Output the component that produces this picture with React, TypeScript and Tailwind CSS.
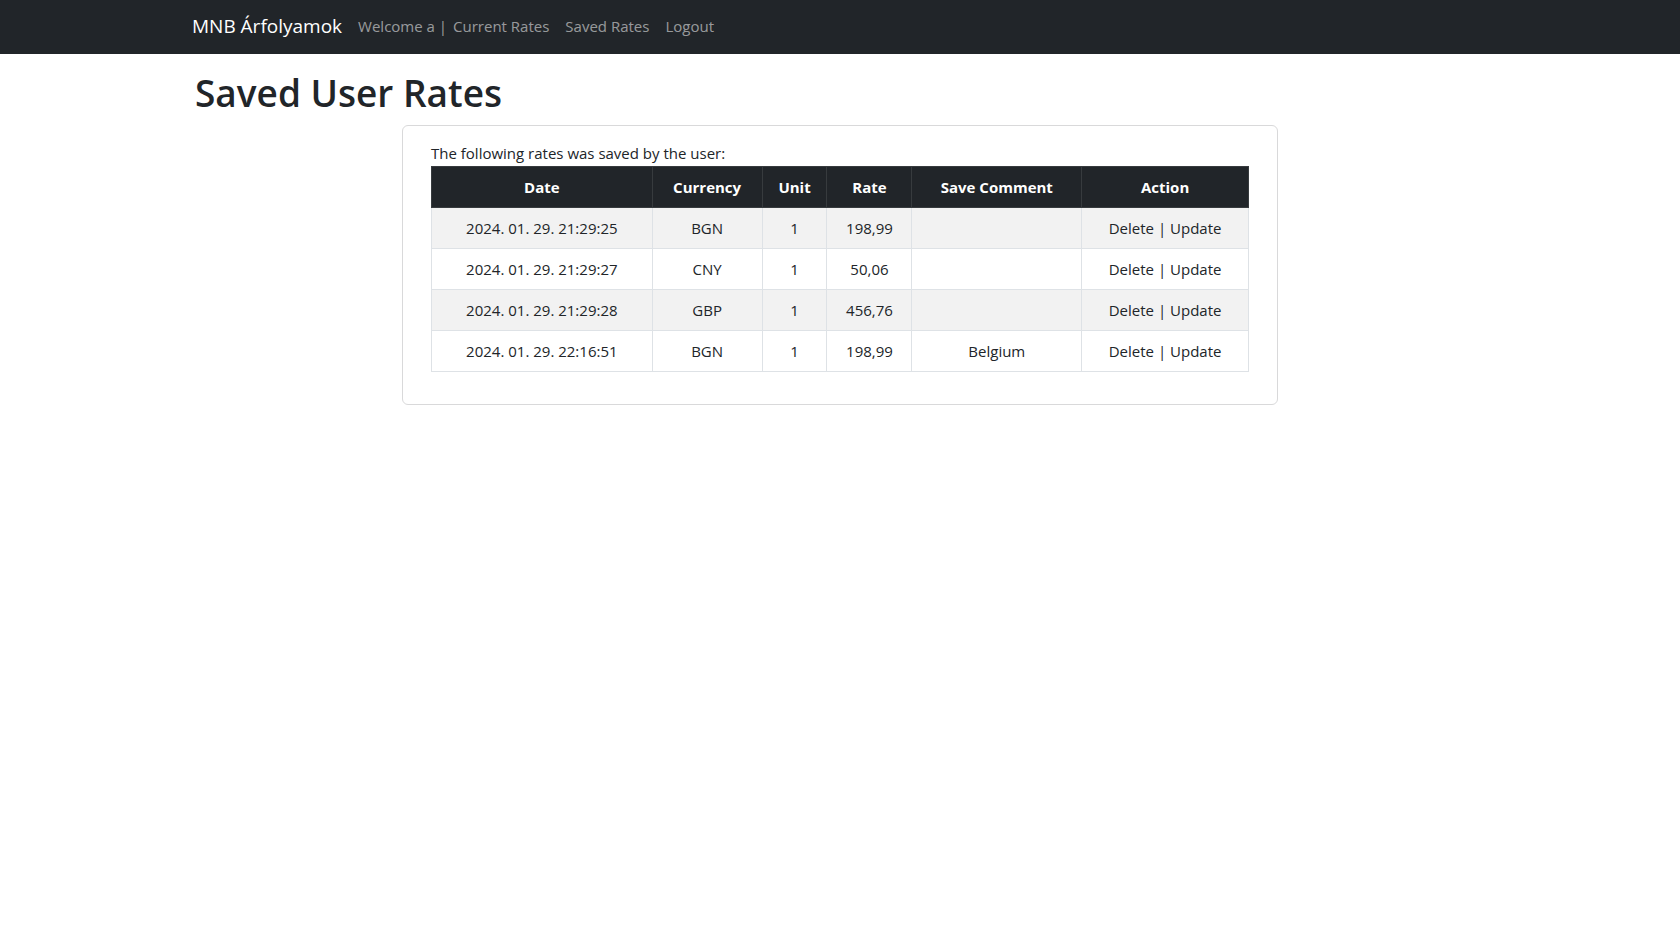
import React from "react";

const rows = [
  { date: "2024. 01. 29. 21:29:25", cur: "BGN", unit: "1", rate: "198,99", comment: "" },
  { date: "2024. 01. 29. 21:29:27", cur: "CNY", unit: "1", rate: "50,06", comment: "" },
  { date: "2024. 01. 29. 21:29:28", cur: "GBP", unit: "1", rate: "456,76", comment: "" },
  { date: "2024. 01. 29. 22:16:51", cur: "BGN", unit: "1", rate: "198,99", comment: "Belgium" },
];

export default function App() {
  return (
    <div className="min-h-[930px] bg-white text-[#212529]" style={{ fontFamily: '"Open Sans", "Noto Sans", sans-serif' }}>
      <nav className="h-[54px] bg-[#212529] flex items-center">
        <div className="w-[1320px] mx-auto px-3 flex items-center pb-px">
          <span className="text-white text-[19px] mr-4">MNB Árfolyamok</span>
          <span className="text-[15px] text-[rgba(255,255,255,0.55)]">Welcome a |</span>
          <span className="text-[15px] text-[rgba(255,255,255,0.55)] ml-1.5">Current Rates</span>
          <span className="text-[15px] text-[rgba(255,255,255,0.55)] ml-4">Saved Rates</span>
          <span className="text-[15px] text-[rgba(255,255,255,0.55)] ml-4">Logout</span>
        </div>
      </nav>
      <div className="w-[1320px] mx-auto px-3">
        <h1 className="text-[37px] leading-[46px] font-semibold mt-4 mb-[9px] ml-[3px]">Saved User Rates</h1>
        <div className="w-[876px] mx-auto border border-[#d9d9da] rounded-md px-[28px] pt-[15px] pb-[32px]">
          <p className="text-[15px] leading-[24px] mb-px">The following rates was saved by the user:</p>
          <table className="border-collapse text-[15px] text-center">
            <thead>
              <tr className="bg-[#212529] text-white font-bold h-[41px]">
                <th className="w-[221px] border border-[#373b3e]">Date</th>
                <th className="w-[110px] border border-[#373b3e]">Currency</th>
                <th className="w-[65px] border border-[#373b3e]">Unit</th>
                <th className="w-[85px] border border-[#373b3e]">Rate</th>
                <th className="w-[170px] border border-[#373b3e]">Save Comment</th>
                <th className="w-[167px] border border-[#373b3e]">Action</th>
              </tr>
            </thead>
            <tbody>
              {rows.map((r, i) => (
                <tr key={i} className={`h-[41px] ${i % 2 === 0 ? "bg-[#f2f2f2]" : "bg-white"}`}>
                  <td className="border border-[#dee2e6]">{r.date}</td>
                  <td className="border border-[#dee2e6]">{r.cur}</td>
                  <td className="border border-[#dee2e6]">{r.unit}</td>
                  <td className="border border-[#dee2e6]">{r.rate}</td>
                  <td className="border border-[#dee2e6]">{r.comment}</td>
                  <td className="border border-[#dee2e6]">Delete | Update</td>
                </tr>
              ))}
            </tbody>
          </table>
        </div>
      </div>
    </div>
  );
}
